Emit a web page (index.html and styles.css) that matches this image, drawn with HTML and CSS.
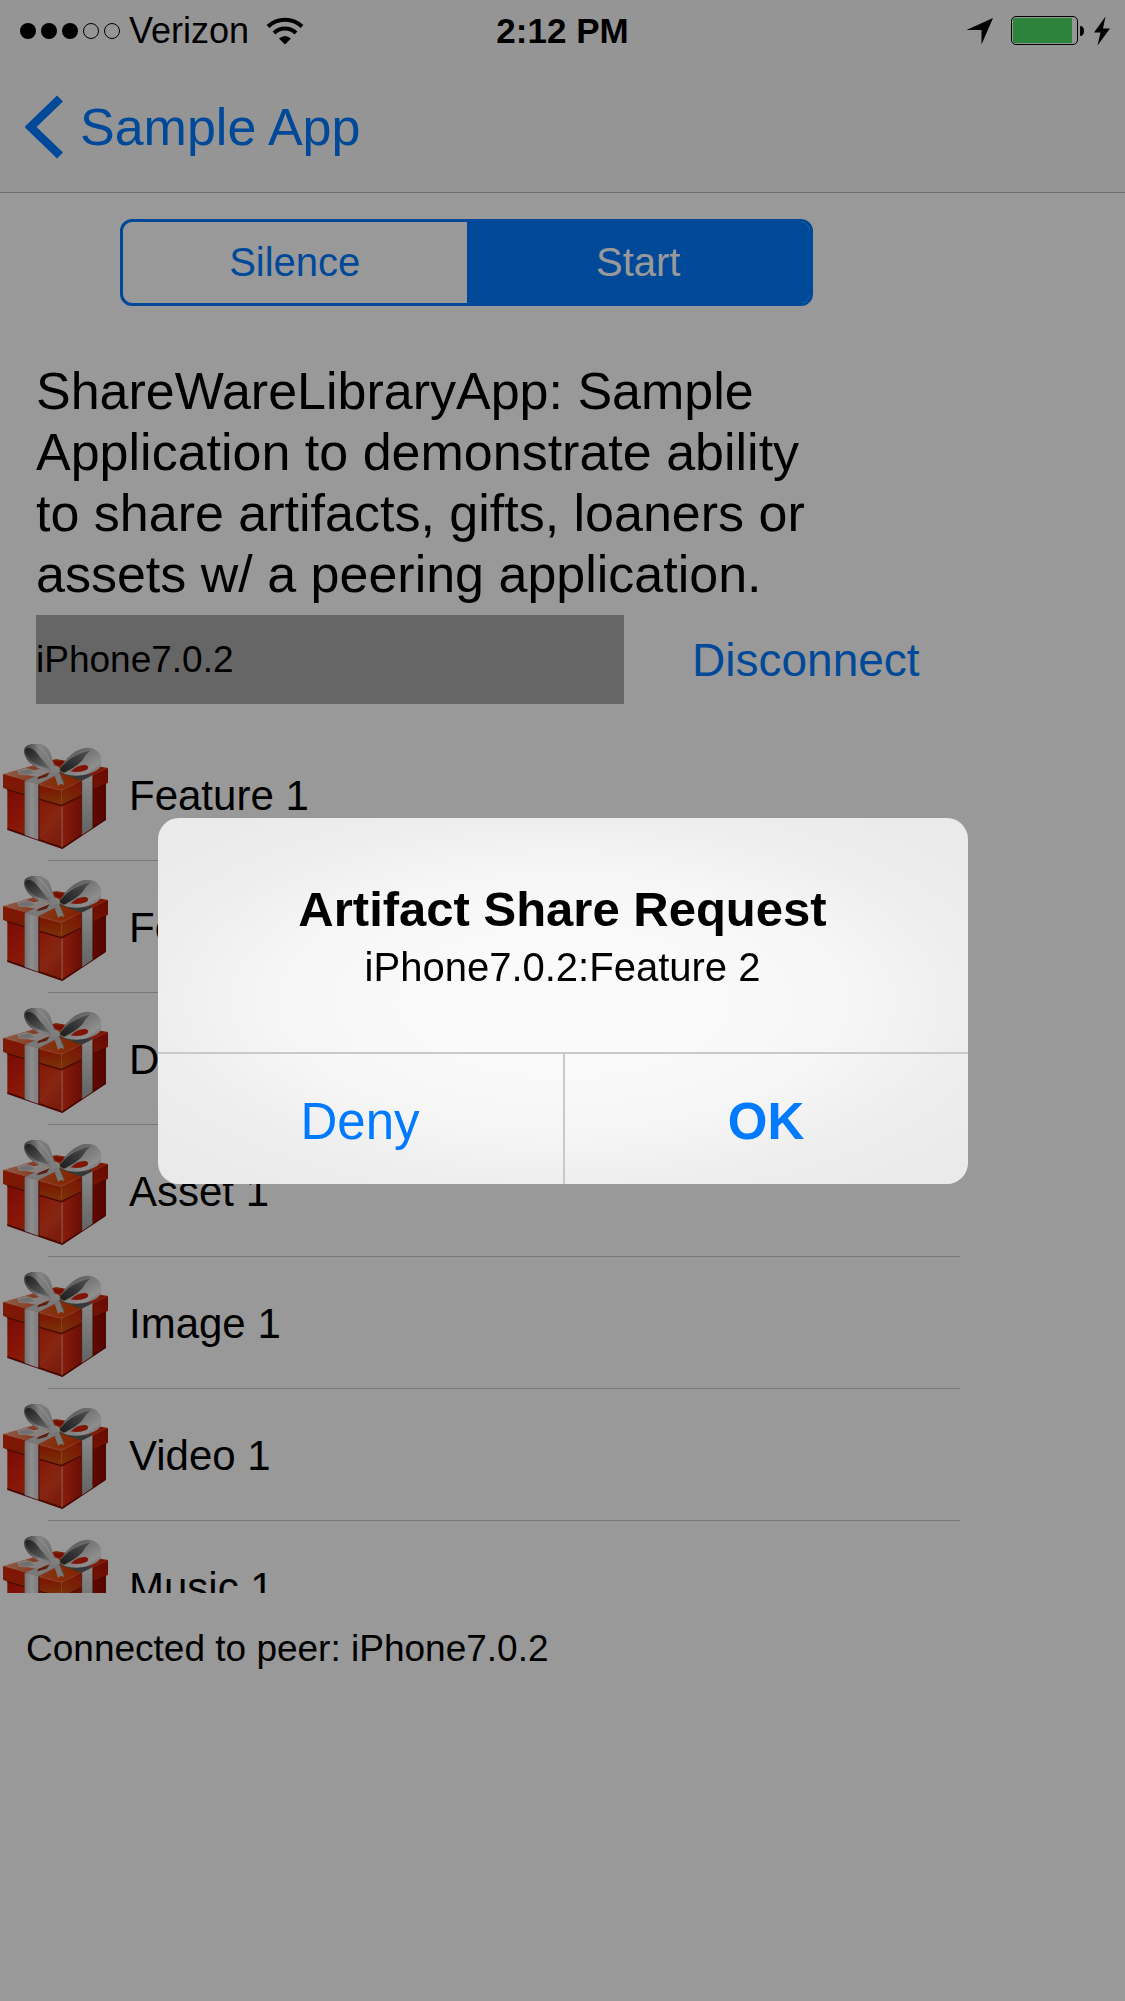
FILE: index.html
```html
<!DOCTYPE html>
<html lang="en">
<head>
<meta charset="utf-8">
<meta name="viewport" content="width=device-width, initial-scale=1">
<title>Sample App</title>
<link rel="stylesheet" href="styles.css">
</head>
<body>
<svg class="sprite" width="0" height="0" aria-hidden="true">
  <defs>
    <linearGradient id="face-left" x1="0" y1="0" x2="1" y2="1">
      <stop offset="0" stop-color="#c81404"/><stop offset=".35" stop-color="#e0240c"/><stop offset=".7" stop-color="#e0401e"/><stop offset="1" stop-color="#c42810"/>
    </linearGradient>
    <linearGradient id="face-right" x1="0" y1="0" x2="1" y2="0">
      <stop offset="0" stop-color="#e03018"/><stop offset=".5" stop-color="#b01404"/><stop offset="1" stop-color="#8c0a02"/>
    </linearGradient>
    <linearGradient id="lid-left" x1="0" y1="0" x2="0" y2="1">
      <stop offset="0" stop-color="#d62808"/><stop offset=".5" stop-color="#cc2a06"/><stop offset="1" stop-color="#cc5a0c"/>
    </linearGradient>
    <linearGradient id="lid-right" x1="0" y1="1" x2="1" y2="0">
      <stop offset="0" stop-color="#d0540c"/><stop offset=".5" stop-color="#c82408"/><stop offset="1" stop-color="#a81004"/>
    </linearGradient>
    <linearGradient id="lid-top" x1="0" y1="0" x2="1" y2="0">
      <stop offset="0" stop-color="#f0a080"/><stop offset=".3" stop-color="#e0643c"/><stop offset=".55" stop-color="#e04808"/><stop offset="1" stop-color="#d02006"/>
    </linearGradient>
    <linearGradient id="band-left" x1="0" y1="0" x2="1" y2="0">
      <stop offset="0" stop-color="#c4c4c4"/><stop offset=".5" stop-color="#ececec"/><stop offset="1" stop-color="#d0d0d0"/>
    </linearGradient>
    <linearGradient id="band-right" x1="0" y1="0" x2="0" y2="1">
      <stop offset="0" stop-color="#e4e4e4"/><stop offset="1" stop-color="#a4a6a6"/>
    </linearGradient>
    <linearGradient id="loop-left" x1="0" y1="0" x2="1" y2="0">
      <stop offset="0" stop-color="#606060"/><stop offset=".5" stop-color="#d8d8d8"/><stop offset="1" stop-color="#bcbcbc"/>
    </linearGradient>
    <linearGradient id="loop-right" x1="0" y1="0" x2="1" y2="1">
      <stop offset="0" stop-color="#686868"/><stop offset=".45" stop-color="#c8c8c8"/><stop offset=".75" stop-color="#eeeeee"/><stop offset="1" stop-color="#8c8c8c"/>
    </linearGradient>
    <linearGradient id="loop-inner" x1="0" y1="0" x2="1" y2="1">
      <stop offset="0" stop-color="#303030"/><stop offset="1" stop-color="#b0b0b0"/>
    </linearGradient>
    <linearGradient id="loop-shade" x1="1" y1="0" x2="0" y2="1">
      <stop offset="0" stop-color="#8a8a8a"/><stop offset=".6" stop-color="#505050"/><stop offset="1" stop-color="#303030"/>
    </linearGradient>
  </defs>
  <symbol id="gift" viewBox="9 12 315 315">
    <path d="M22 142L187 190V326L22 268Z" fill="url(#face-left)"/>
    <path d="M187 190L318 124V238L187 326Z" fill="url(#face-right)"/>
    <path d="M22 264L187 321L318 234V240L187 327L22 270Z" fill="#7a0a02"/>
    <path d="M9 102L86 80L168 57L324 84L184 150Z" fill="url(#lid-top)"/>
    <path d="M9 102L184 150V196L22 149L9 143Z" fill="url(#lid-left)"/>
    <path d="M184 150L324 84V128L184 196Z" fill="url(#lid-right)"/>
    <path d="M22 149L184 197L318 132" fill="none" stroke="#7c1204" stroke-width="4"/>
    <path d="M186 200V322" stroke="#e87860" stroke-width="4"/>
    <path d="M115 134L182 151L222 132" fill="none" stroke="#f06a44" stroke-width="3"/>
    <path d="M75 122L148 91L176 102L115 132Z" fill="#cacaca"/>
    <path d="M74 122L116 132V300L74 285Z" fill="url(#band-left)"/>
    <path d="M117 134V300" stroke="#7a160a" stroke-width="3"/>
    <path d="M178 98L206 91L278 106L246 123Z" fill="#5c5e5e"/>
    <path d="M245 122L278 106V263L245 286Z" fill="url(#band-right)"/>
    <path d="M245 124V284M279 108V262" stroke="#701008" stroke-width="2"/>
    <path d="M50 91L80 84L101 91L140 82L152 94L112 111L83 106L58 104Z" fill="#e0d8d4"/>
    <path d="M58 93L86 87L102 98L82 104L58 102Z" fill="#bcbcbc"/>
    <path d="M114 111L149 97L140 110L112 118Z" fill="#a03018"/>
    <path d="M156 61L188 62L200 72L170 79Z" fill="#c41c04"/>
    <path d="M150 92Q112 92 86 65Q66 40 75 22Q89 7 122 12Q146 20 153 44Q158 62 166 82Z" fill="url(#loop-left)"/>
    <path d="M77 27Q90 18 108 36Q128 60 149 86Q112 80 91 60Q73 40 77 27Z" fill="url(#loop-inner)"/>
    <path d="M108 14Q143 36 158 83" fill="none" stroke="#ffffff" stroke-width="5" opacity=".4"/>
    <path d="M178 91Q204 38 250 25Q284 18 300 43Q312 76 292 90Q258 111 211 106Q191 104 178 91Z" fill="url(#loop-right)"/>
    <path d="M178 90Q204 49 271 31Q257 43 247 61Q228 82 192 98Z" fill="url(#loop-shade)"/>
    <path d="M212 94Q234 73 257 75Q270 78 261 89Q238 99 212 94Z" fill="#d42408"/>
    <path d="M151 83Q158 74 172 78Q183 84 179 96Q168 104 154 98Z" fill="#d4d4d4"/>
    <path d="M160 97L178 96L193 134L181 132L175 139Z" fill="#c6c6c6"/>
    <path d="M178 98L193 132" stroke="#888" stroke-width="2"/>
  </symbol>
</svg>

<div class="app">
  <header class="top">
    <div class="status">
      <div class="status-left">
        <svg width="100" height="18" viewBox="0 0 100 18" role="img" aria-label="Signal: three of five">
          <circle cx="8" cy="9" r="8"/><circle cx="29" cy="9" r="8"/><circle cx="50" cy="9" r="8"/>
          <circle cx="71" cy="9" r="7.5" fill="none" stroke="#000"/><circle cx="92" cy="9" r="7.5" fill="none" stroke="#000"/>
        </svg>
        <span class="carrier">Verizon</span>
        <svg width="38" height="28" viewBox="0 0 38 28" role="img" aria-label="Wi-Fi">
          <path d="M2 9.500A24.500 24.500 0 0 1 36 9.500M8 16A16 16 0 0 1 30 16" fill="none" stroke="#000" stroke-width="4"/>
          <path d="M13 21.500Q19 16.500 25 21.500L19 27.500Z"/>
        </svg>
      </div>
      <time class="clock">2:12 PM</time>
      <div class="status-right">
        <svg width="28" height="28" viewBox="0 0 28 28" role="img" aria-label="Location"><path d="M27 1L15.500 27.500V13H0.500Z"/></svg>
        <svg class="battery" width="74" height="30" viewBox="0 0 74 30" role="img" aria-label="Battery charging">
          <rect x=".5" y=".5" width="66" height="28" rx="4.500" fill="none" stroke="#000"/>
          <path d="M4 2H61V27H4Q2 27 2 25V4Q2 2 4 2Z" fill="#4cd964"/>
          <path d="M69 10Q73 10 73 15T69 20Z"/>
        </svg>
        <svg width="16" height="30" viewBox="0 0 16 30" role="img" aria-label="Charging"><path d="M11.500 0.500L0 16.500H6.500L3.500 29.500L16 12.500H9Z"/></svg>
      </div>
    </div>
    <nav class="nav">
      <a class="back" href="#">
        <svg width="38" height="64" viewBox="0 0 38 64" aria-hidden="true"><path d="M35 3.500L5.500 32L35 60.500" fill="none" stroke="#007aff" stroke-width="8.500"/></svg>
        Sample App
      </a>
    </nav>
  </header>

  <main>
    <div class="segments" role="group" aria-label="Sharing">
      <button type="button" class="segment" aria-pressed="false">Silence</button>
      <button type="button" class="segment" aria-pressed="true">Start</button>
    </div>
    <p class="intro">ShareWareLibraryApp: Sample Application to demonstrate ability to share artifacts, gifts, loaners or assets w/ a peering application.</p>
    <div class="peer">
      <input class="peer-name" type="text" aria-label="Peer name" value="iPhone7.0.2">
      <button type="button" class="disconnect">Disconnect</button>
    </div>
    <ul class="items">
      <li class="item"><svg class="gift" aria-hidden="true"><use href="#gift"/></svg>Feature 1</li>
      <li class="item"><svg class="gift" aria-hidden="true"><use href="#gift"/></svg>Feature 2</li>
      <li class="item"><svg class="gift" aria-hidden="true"><use href="#gift"/></svg>Data 1</li>
      <li class="item"><svg class="gift" aria-hidden="true"><use href="#gift"/></svg>Asset 1</li>
      <li class="item"><svg class="gift" aria-hidden="true"><use href="#gift"/></svg>Image 1</li>
      <li class="item"><svg class="gift" aria-hidden="true"><use href="#gift"/></svg>Video 1</li>
      <li class="item"><svg class="gift" aria-hidden="true"><use href="#gift"/></svg>Music 1</li>
    </ul>
    <p class="connection">Connected to peer: iPhone7.0.2</p>
  </main>
</div>

<div class="backdrop">
  <section class="alert" role="alertdialog" aria-modal="true" aria-labelledby="alert-title" aria-describedby="alert-message">
    <div class="alert-body">
      <h1 class="alert-title" id="alert-title">Artifact Share Request</h1>
      <p class="alert-message" id="alert-message">iPhone7.0.2:Feature 2</p>
    </div>
    <div class="alert-actions">
      <button type="button" class="action">Deny</button>
      <button type="button" class="action action-default">OK</button>
    </div>
  </section>
</div>
</body>
</html>
```
FILE: styles.css
```css
* {
  box-sizing: border-box;
}

body {
  margin: 0;
  background: #fff;
  color: #000;
  font-family: "Liberation Sans", Arial, sans-serif;
  font-size: 37px;
}

button,
input {
  margin: 0;
  padding: 0;
  border: 0;
  border-radius: 0;
  background: none;
  color: inherit;
  font: inherit;
}

h1,
p,
ul {
  margin: 0;
  padding: 0;
}

.sprite {
  position: absolute;
}

.app {
  min-height: 100vh;
}

/* Status and navigation bars */
.top {
  border-bottom: 1px solid #b2b2b2;
  background: #f8f8f8;
}

.status {
  display: grid;
  grid-template-columns: 1fr auto 1fr;
  align-items: center;
  height: 62px;
  padding: 0 15px;
  font-size: 36px;
}

.status-left,
.status-right {
  display: flex;
  align-items: center;
}

.status-left {
  padding-left: 5px;
}

.carrier {
  margin: 0 17px 0 9px;
}

.clock {
  font-size: 35px;
  font-weight: bold;
}

.status-right {
  justify-content: flex-end;
}

.battery {
  margin: 0 9px 0 17px;
}

.nav {
  display: flex;
  align-items: center;
  height: 130px;
  padding: 0 25px;
}

.back {
  display: flex;
  align-items: center;
  gap: 17px;
  color: #007aff;
  font-size: 52px;
  text-decoration: none;
}

/* Sharing controls */
.segments {
  display: grid;
  grid-template-columns: 1fr 1fr;
  width: calc(100% - 432px);
  height: 87px;
  margin: 26px 0 0 120px;
  overflow: hidden;
  border: 3px solid #007aff;
  border-radius: 12px;
}

.segment {
  color: #007aff;
  font-size: 40px;
}

.segment[aria-pressed="true"] {
  background: #007aff;
  color: #fff;
}

.intro {
  max-width: 790px;
  margin: 55px 0 10px 36px;
  font-size: 52px;
  line-height: 61px;
}

.peer {
  display: flex;
  gap: 68px;
  padding-left: 36px;
}

.peer-name {
  width: 54%;
  height: 89px;
  background: #aaa;
}

.disconnect {
  color: #007aff;
  font-size: 46px;
}

/* Shareable items */
.items {
  height: 864px;
  margin: 25px 165px 0 0;
  overflow: hidden;
  list-style: none;
}

.item {
  display: flex;
  align-items: center;
  gap: 21px;
  height: 132px;
  padding: 2px 0 0 3px;
  background: linear-gradient(#c8c7cc, #c8c7cc) 48px 100% / 100% 1px no-repeat;
  font-size: 42px;
}

.gift {
  width: 105px;
  height: 105px;
}

.connection {
  padding: 34px 26px;
  line-height: 44px;
}

/* Alert */
.backdrop {
  position: fixed;
  inset: 0;
  display: flex;
  align-items: center;
  justify-content: center;
  background: rgba(0, 0, 0, 0.4);
}

.alert {
  width: 72%;
  overflow: hidden;
  border-radius: 21px;
  background: radial-gradient(farthest-side, #fafafa 30%, #f6f6f6 70%, #eeeeee 100%, #eaeaea 130%);
  text-align: center;
}

.alert-body {
  padding: 61px 36px;
}

.alert-title {
  margin-bottom: 4px;
  font-size: 49px;
  line-height: 60px;
}

.alert-message {
  font-size: 40px;
  line-height: 48px;
}

.alert-actions {
  display: grid;
  grid-template-columns: 1fr 1fr;
  border-top: 2px solid #c9c8cd;
}

.action {
  height: 130px;
  padding-top: 6px;
  color: #007aff;
  font-size: 51px;
}

.action-default {
  border-left: 2px solid #c9c8cd;
  font-weight: bold;
}
```
